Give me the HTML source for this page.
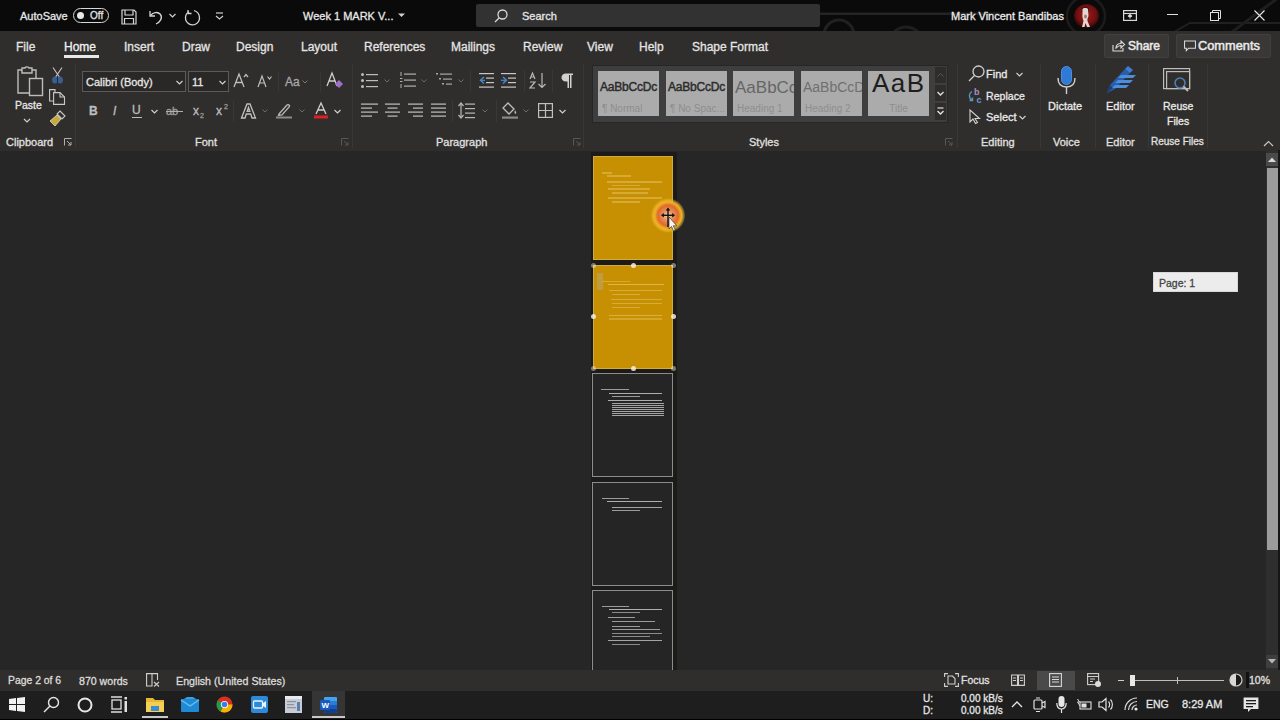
<!DOCTYPE html>
<html><head><meta charset="utf-8">
<style>
*{margin:0;padding:0;box-sizing:border-box}
html,body{width:1280px;height:720px;overflow:hidden;background:#262626;font-family:"Liberation Sans",sans-serif;color:#e6e6e6}
.a{position:absolute}
#title{left:0;top:0;width:1280px;height:31px;background:#0a0a0a}
#ribbon{left:0;top:31px;width:1280px;height:120px;background:#302e2c}
#doc{left:0;top:151px;width:1280px;height:519px;background:#262626}
#status{left:0;top:670px;width:1280px;height:21px;background:#302e2c;border-top:1px solid #302e2c}
#task{left:0;top:691px;width:1280px;height:29px;background:#1e1e1f;border-bottom:1px solid #000}
.t{position:absolute;white-space:nowrap;font-size:12px;line-height:14px;-webkit-text-stroke:0.3px currentColor}
svg{position:absolute;overflow:visible}
.sty{width:61px;height:45px;background:#ababab;overflow:hidden}
.sty .s1{position:absolute;left:2px;top:9px;font-size:12px;line-height:14px;color:#2b2b2b;white-space:nowrap;letter-spacing:-0.2px;font-weight:normal;-webkit-text-stroke:0.45px #2b2b2b}
.sty .s2{position:absolute;left:4px;top:32px;font-size:10px;line-height:12px;color:#8e8e8e;white-space:nowrap}
</style></head><body>
<div id="title" class="a"></div>
<div id="ribbon" class="a"></div>
<div id="doc" class="a"></div>
<div id="status" class="a"></div>
<div id="task" class="a"></div>

<!-- TITLE BAR -->
<svg style="left:0;top:0;overflow:hidden" width="1280" height="31">
  <g stroke="#1c1c1c" stroke-width="2.5" fill="none">
    <path d="M820 13.7 H1000" stroke="#242424" stroke-width="2.6"/>
    <circle cx="839" cy="35" r="15" stroke="#212121" stroke-width="3"/>
    <circle cx="906" cy="44" r="17" stroke="#1e1e1e" stroke-width="3"/>
    <circle cx="1086" cy="16" r="19"/>
    <path d="M1174 32 L1190 23 H1280" stroke="#202020" stroke-width="2"/>
    <path d="M1232 32 L1278 -2" stroke="#1e1e1e" stroke-width="3"/>
  </g>
</svg>
<div class="t" style="left:20px;top:9px;font-size:11px;color:#e8e8e8">AutoSave</div>
<div class="a" style="left:73px;top:8px;width:36px;height:15px;border:1.5px solid #d8d8d8;border-radius:8px"></div>
<div class="a" style="left:77px;top:12px;width:7px;height:7px;border-radius:50%;background:#e8e8e8"></div>
<div class="t" style="left:90px;top:9px;font-size:10px;color:#e0e0e0">Off</div>
<svg style="left:121px;top:9px" width="16" height="16" viewBox="0 0 16 16"><g fill="none" stroke="#d6d6d6" stroke-width="1.2"><path d="M1 1 H13 L15 3 V15 H1 Z"/><path d="M4 1 V6 H12 V1"/><path d="M3.5 15 V9.5 H12.5 V15"/></g></svg>
<svg style="left:148px;top:9px" width="16" height="16" viewBox="0 0 16 16"><g fill="none" stroke="#d6d6d6" stroke-width="1.3"><path d="M2 2 V7 H7"/><path d="M2.5 6.5 C5 3 10 2.5 12.5 5.5 C15 9 12 13 8 15"/></g></svg>
<svg style="left:169px;top:13px" width="7" height="5" viewBox="0 0 7 5"><path d="M0.5 1 L3.5 4 L6.5 1" fill="none" stroke="#cfcfcf" stroke-width="1.2"/></svg>
<svg style="left:184px;top:9px" width="17" height="17" viewBox="0 0 17 17"><g fill="none" stroke="#d6d6d6" stroke-width="1.3"><path d="M10 1.5 C13.5 2.5 15.5 5.5 15.5 9 A7 7 0 1 1 5 2.8"/><path d="M4 1 V4.5 H7.5"/></g></svg>
<svg style="left:215px;top:12px" width="9" height="8" viewBox="0 0 9 8"><g fill="none" stroke="#cfcfcf" stroke-width="1.2"><path d="M1 1 H8"/><path d="M1 4 L4.5 7 L8 4"/></g></svg>
<div class="t" style="left:303px;top:9px;font-size:11px;color:#e8e8e8">Week 1 MARK V...</div>
<svg style="left:398px;top:13px" width="7" height="5" viewBox="0 0 7 5"><path d="M0 0.5 H7 L3.5 4 Z" fill="#d0d0d0"/></svg>
<div class="a" style="left:476px;top:4px;width:344px;height:23px;background:#323232;border-radius:2px"></div>
<svg style="left:494px;top:9px" width="14" height="14" viewBox="0 0 14 14"><g fill="none" stroke="#d8d8d8" stroke-width="1.3"><circle cx="8.5" cy="5.5" r="4.5"/><path d="M5.3 8.7 L1 13"/></g></svg>
<div class="t" style="left:522px;top:9px;font-size:11px;color:#e6e6e6">Search</div>
<div class="t" style="left:951px;top:9px;font-size:11px;color:#ececec">Mark Vincent Bandibas</div>
<svg style="left:1074px;top:4px" width="25" height="24" viewBox="0 0 25 24">
  <defs><radialGradient id="av" cx="50%" cy="45%" r="55%"><stop offset="0" stop-color="#a01818"/><stop offset="0.7" stop-color="#701010"/><stop offset="1" stop-color="#2a0808"/></radialGradient></defs>
  <ellipse cx="12.5" cy="12" rx="12.5" ry="12" fill="url(#av)"/>
  <path d="M7.5 4 C9 2.5 14 2.5 15 4 L15 8 L8 8Z" fill="#3a1515"/>
  <path d="M8.5 5 C9 3.5 13.5 3.5 14 5 L14.5 12 C14 14 13 15 13.5 17 L16 23 L13 23 L11.5 19 L10.5 23 L8 23 L9.5 17 C9 15 8 13 8.5 10Z" fill="#e6d6d2"/>
  <ellipse cx="11.5" cy="12.5" rx="1.5" ry="2" fill="#9a8070"/>
</svg>
<svg style="left:1123px;top:10px" width="14" height="11" viewBox="0 0 14 11"><g fill="none" stroke="#d8d8d8" stroke-width="1.2"><rect x="0.6" y="0.6" width="12.8" height="9.8"/><path d="M0.6 3.5 H13.4"/><path d="M7 4.5 V8.5 M5 6.5 L7 4.5 L9 6.5"/></g></svg>
<div class="a" style="left:1167px;top:14px;width:11px;height:1px;background:#e0e0e0"></div>
<svg style="left:1210px;top:10px" width="12" height="11" viewBox="0 0 12 11"><g fill="none" stroke="#e0e0e0" stroke-width="1"><rect x="0.5" y="2.5" width="8" height="8"/><path d="M2.5 2.5 V0.5 H10.5 V8.5 H8.5"/></g></svg>
<svg style="left:1254px;top:10px" width="11" height="11" viewBox="0 0 11 11"><path d="M0.5 0.5 L10.5 10.5 M10.5 0.5 L0.5 10.5" stroke="#e8e8e8" stroke-width="1.1"/></svg>

<!-- RIBBON TABS -->
<div class="t" style="left:16px;top:40px;color:#e4e4e4">File</div>
<div class="t" style="left:64px;top:40px;color:#f2f2f2">Home</div>
<div class="a" style="left:64px;top:55px;width:35px;height:3px;background:#e8e8e8"></div>
<div class="t" style="left:124px;top:40px;color:#e4e4e4">Insert</div>
<div class="t" style="left:182px;top:40px;color:#e4e4e4">Draw</div>
<div class="t" style="left:236px;top:40px;color:#e4e4e4">Design</div>
<div class="t" style="left:301px;top:40px;color:#e4e4e4">Layout</div>
<div class="t" style="left:364px;top:40px;color:#e4e4e4">References</div>
<div class="t" style="left:451px;top:40px;color:#e4e4e4">Mailings</div>
<div class="t" style="left:523px;top:40px;color:#e4e4e4">Review</div>
<div class="t" style="left:587px;top:40px;color:#e4e4e4">View</div>
<div class="t" style="left:639px;top:40px;color:#e4e4e4">Help</div>
<div class="t" style="left:692px;top:40px;color:#e4e4e4">Shape Format</div>
<!-- share/comments -->
<div class="a" style="left:1104px;top:34px;width:65px;height:24px;background:#393837;border:1px solid #42403f;border-radius:2px"></div>
<svg style="left:1112px;top:40px" width="13" height="12" viewBox="0 0 13 12"><g fill="none" stroke="#dcdcdc" stroke-width="1.1"><path d="M1 5 V11 H11 V8"/><path d="M4 8 C4 5 6 3.5 9 3.5 V1 L12.5 4.5 L9 8 V5.5 C7 5.5 5.5 6.5 4 8Z"/></g></svg>
<div class="t" style="left:1128px;top:39px;color:#eaeaea;-webkit-text-stroke:0.5px #eaeaea">Share</div>
<div class="a" style="left:1176px;top:34px;width:95px;height:24px;background:#393837;border:1px solid #42403f;border-radius:2px"></div>
<svg style="left:1184px;top:40px" width="12" height="12" viewBox="0 0 13 12"><path d="M0.6 0.6 H12.4 V8.4 H5 L2.5 11 V8.4 H0.6 Z" fill="none" stroke="#dcdcdc" stroke-width="1.1"/></svg>
<div class="t" style="left:1198px;top:39px;font-size:12.8px;color:#eaeaea;-webkit-text-stroke:0.5px #eaeaea">Comments</div>

<!-- group separators -->
<div class="a" style="left:75px;top:64px;width:1px;height:84px;background:#3a3837"></div>
<div class="a" style="left:352px;top:64px;width:1px;height:84px;background:#3a3837"></div>
<div class="a" style="left:583px;top:64px;width:1px;height:84px;background:#3a3837"></div>
<div class="a" style="left:957px;top:64px;width:1px;height:84px;background:#3a3837"></div>
<div class="a" style="left:1040px;top:64px;width:1px;height:84px;background:#3a3837"></div>
<div class="a" style="left:1095px;top:64px;width:1px;height:84px;background:#3a3837"></div>
<div class="a" style="left:1148px;top:64px;width:1px;height:84px;background:#3a3837"></div>
<div class="a" style="left:1207px;top:64px;width:1px;height:84px;background:#3a3837"></div>

<!-- CLIPBOARD -->
<svg style="left:16px;top:66px" width="28" height="31" viewBox="0 0 28 31"><g fill="none" stroke="#bdbdbd" stroke-width="1.4"><path d="M6 4 H2 V27 H13"/><path d="M16 4 H20 V12"/><path d="M6 2 H9 C9 0.5 13 0.5 13 2 H16 V7 H6 Z"/><rect x="13.5" y="12.5" width="13" height="17"/></g></svg>
<div class="t" style="left:15px;top:98px;font-size:10.5px;color:#e6e6e6">Paste</div>
<svg style="left:23px;top:118px" width="8" height="5" viewBox="0 0 8 5"><path d="M1 1 L4 4 L7 1" fill="none" stroke="#cfcfcf" stroke-width="1.2"/></svg>
<svg style="left:51px;top:67px" width="13" height="17" viewBox="0 0 13 17"><g fill="none" stroke="#c8c8c8" stroke-width="1.1"><path d="M2 0.5 L9 11"/><path d="M11 0.5 L4 11"/></g><ellipse cx="4" cy="13" rx="3" ry="3.5" fill="#3b5e8e"/><ellipse cx="9" cy="13" rx="3" ry="3.5" fill="#3b5e8e"/><path d="M6.5 10 V16" stroke="#1a2a40" stroke-width="1"/></svg>
<svg style="left:49px;top:89px" width="17" height="16" viewBox="0 0 17 16"><g fill="none" stroke="#c8c8c8" stroke-width="1.1"><path d="M6 3 V0.6 H0.6 V12 H4"/><path d="M4.6 3.6 H11 L15.5 8 V15.4 H4.6 Z"/><path d="M11 3.6 V8 H15.5"/></g></svg>
<svg style="left:49px;top:110px" width="17" height="17" viewBox="0 0 17 17"><path d="M11 1 L16 6 L13 9 L8 4 Z" fill="none" stroke="#c8c8c8" stroke-width="1.1"/><path d="M8 5 L12 9 L6 16 L1 11 Z" fill="#c9a93a"/><path d="M8 5 L12 9 L6 16 L1 11 Z" fill="none" stroke="#d8d8d8" stroke-width="0.8"/></svg>
<div class="t" style="left:6px;top:135px;font-size:11px;color:#e0e0e0">Clipboard</div>
<svg style="left:64px;top:138px" width="8" height="8" viewBox="0 0 8 8"><g fill="none" stroke="#b0b0b0" stroke-width="1"><path d="M0.5 7.5 V0.5 H7.5"/><path d="M3 3 L7 7 M7 4 V7 H4"/></g></svg>

<!-- FONT GROUP -->
<div class="a" style="left:82px;top:71px;width:104px;height:21px;border:1px solid #5c5a59;background:#2a2827"></div>
<div class="t" style="left:86px;top:75px;font-size:11px;color:#e6e6e6">Calibri (Body)</div>
<svg style="left:176px;top:80px" width="7" height="5" viewBox="0 0 7 5"><path d="M0.5 1 L3.5 4 L6.5 1" fill="none" stroke="#d0d0d0" stroke-width="1.2"/></svg>
<div class="a" style="left:188px;top:71px;width:41px;height:21px;border:1px solid #5c5a59;background:#2a2827"></div>
<div class="t" style="left:192px;top:75px;font-size:11px;color:#e6e6e6">11</div>
<svg style="left:219px;top:80px" width="7" height="5" viewBox="0 0 7 5"><path d="M0.5 1 L3.5 4 L6.5 1" fill="none" stroke="#d0d0d0" stroke-width="1.2"/></svg>
<!-- grow/shrink -->
<svg style="left:233px;top:73px" width="16" height="15" viewBox="0 0 16 15"><g fill="none" stroke="#bdbdbd" stroke-width="1.3"><path d="M1 14 L6 1 L11 14 M3 9.5 H9"/><path d="M11 4 L13 1.5 L15 4"/></g></svg>
<svg style="left:257px;top:75px" width="15" height="13" viewBox="0 0 15 13"><g fill="none" stroke="#bdbdbd" stroke-width="1.2"><path d="M1 12 L5 1 L9 12 M2.5 8 H7.5"/><path d="M10.5 1.5 L12.5 4 L14.5 1.5"/></g></svg>
<div class="t" style="left:285px;top:75px;font-size:12px;color:#a8a8a8">Aa</div>
<svg style="left:302px;top:80px" width="6" height="4" viewBox="0 0 6 4"><path d="M0.5 0.5 L3 3 L5.5 0.5" fill="none" stroke="#7a7a7a" stroke-width="1"/></svg>
<div class="a" style="left:278px;top:72px;width:1px;height:20px;background:#3a3837"></div>
<div class="a" style="left:320px;top:72px;width:1px;height:20px;background:#3a3837"></div>
<svg style="left:326px;top:72px" width="18" height="17" viewBox="0 0 18 17"><g fill="none" stroke="#cfcfcf" stroke-width="1.3"><path d="M1 14 L6 1 L11 14 M3 9 H9"/></g><path d="M9 12 L13 8 L17 12 L13 16Z" fill="#a070c8"/></svg>
<!-- row 2 -->
<div class="t" style="left:89px;top:104px;font-size:12px;font-weight:bold;color:#bdbdbd">B</div>
<div class="t" style="left:113px;top:104px;font-size:12px;font-style:italic;color:#bdbdbd">I</div>
<div class="t" style="left:132px;top:103px;font-size:12px;color:#bdbdbd">U</div>
<div class="a" style="left:132px;top:117px;width:10px;height:1px;background:#bdbdbd"></div>
<svg style="left:151px;top:109px" width="7" height="5" viewBox="0 0 7 5"><path d="M0.5 1 L3.5 4 L6.5 1" fill="none" stroke="#cfcfcf" stroke-width="1.2"/></svg>
<div class="t" style="left:166px;top:104px;font-size:11px;color:#a0a0a0">ab</div>
<div class="a" style="left:166px;top:111px;width:17px;height:1px;background:#b0b0b0"></div>
<div class="t" style="left:193px;top:104px;font-size:12px;color:#bdbdbd">x</div>
<div class="t" style="left:200px;top:109px;font-size:7px;color:#9a9a9a">2</div>
<div class="t" style="left:216px;top:104px;font-size:12px;color:#bdbdbd">x</div>
<div class="t" style="left:224px;top:100px;font-size:7px;color:#9a9a9a">2</div>
<div class="a" style="left:233px;top:100px;width:1px;height:22px;background:#3a3837"></div>
<svg style="left:240px;top:103px" width="17" height="16" viewBox="0 0 17 16"><path d="M1.5 15 L7 1 H10 L15.5 15 H12 L10.7 11 H6.3 L5 15 Z M7.2 8.3 H9.8 L8.5 4.5 Z" fill="none" stroke="#c0c0c0" stroke-width="1.3"/></svg>
<svg style="left:262px;top:109px" width="6" height="4" viewBox="0 0 6 4"><path d="M0.5 0.5 L3 3 L5.5 0.5" fill="none" stroke="#6a6a6a" stroke-width="1"/></svg>
<svg style="left:275px;top:103px" width="18" height="16" viewBox="0 0 18 16"><g fill="none" stroke="#b8b8b8" stroke-width="1.3"><path d="M4 11 L12 2 C13 1 15 2 14.5 3.5 L7 12 L3.5 12.5 Z"/></g><rect x="1" y="13.5" width="16" height="2" fill="#8a8a8a"/></svg>
<svg style="left:299px;top:109px" width="6" height="4" viewBox="0 0 6 4"><path d="M0.5 0.5 L3 3 L5.5 0.5" fill="none" stroke="#6a6a6a" stroke-width="1"/></svg>
<svg style="left:313px;top:102px" width="16" height="17" viewBox="0 0 16 17"><g fill="none" stroke="#d0d0d0" stroke-width="1.3"><path d="M3 12 L8 1 L13 12 M5 8 H11"/></g><rect x="1" y="13.5" width="14" height="3" fill="#e02020"/></svg>
<svg style="left:334px;top:109px" width="7" height="5" viewBox="0 0 7 5"><path d="M0.5 1 L3.5 4 L6.5 1" fill="none" stroke="#cfcfcf" stroke-width="1.2"/></svg>
<div class="t" style="left:195px;top:135px;font-size:11px;color:#e0e0e0">Font</div>
<svg style="left:341px;top:138px" width="8" height="8" viewBox="0 0 8 8"><g fill="none" stroke="#575757" stroke-width="1"><path d="M0.5 7.5 V0.5 H7.5"/><path d="M3 3 L7 7 M7 4 V7 H4"/></g></svg>

<!-- PARAGRAPH -->
<svg style="left:361px;top:73px" width="17" height="15" viewBox="0 0 17 15"><g fill="#bdbdbd"><circle cx="1.5" cy="1.5" r="1.5"/><circle cx="1.5" cy="7.5" r="1.5"/><circle cx="1.5" cy="13.5" r="1.5"/><rect x="5" y="1" width="12" height="1.2"/><rect x="5" y="7" width="12" height="1.2"/><rect x="5" y="13" width="12" height="1.2"/></g></svg>
<svg style="left:384px;top:79px" width="6" height="4" viewBox="0 0 6 4"><path d="M0.5 0.5 L3 3 L5.5 0.5" fill="none" stroke="#6a6a6a" stroke-width="1"/></svg>
<svg style="left:400px;top:72px" width="16" height="16" viewBox="0 0 16 16"><g fill="#b0b0b0"><rect x="0.5" y="0" width="1" height="4"/><rect x="0" y="6" width="2.5" height="1"/><rect x="0" y="9" width="2.5" height="1"/><rect x="0.5" y="12" width="1" height="4"/><rect x="4" y="1.5" width="12" height="1.2"/><rect x="4" y="7.5" width="12" height="1.2"/><rect x="4" y="13.5" width="12" height="1.2"/></g></svg>
<svg style="left:421px;top:79px" width="6" height="4" viewBox="0 0 6 4"><path d="M0.5 0.5 L3 3 L5.5 0.5" fill="none" stroke="#6a6a6a" stroke-width="1"/></svg>
<svg style="left:436px;top:72px" width="16" height="16" viewBox="0 0 16 16"><g fill="#a8a8a8"><rect x="0" y="1" width="2" height="1.5"/><rect x="4" y="1.5" width="12" height="1.2"/><rect x="3" y="6" width="2" height="1.5"/><rect x="7" y="6.5" width="9" height="1.2"/><rect x="6" y="11" width="2" height="1.5"/><rect x="10" y="11.5" width="6" height="1.2"/></g></svg>
<svg style="left:458px;top:79px" width="6" height="4" viewBox="0 0 6 4"><path d="M0.5 0.5 L3 3 L5.5 0.5" fill="none" stroke="#6a6a6a" stroke-width="1"/></svg>
<div class="a" style="left:470px;top:70px;width:1px;height:22px;background:#3a3837"></div>
<svg style="left:479px;top:73px" width="15" height="15" viewBox="0 0 15 15"><g fill="#c8c8c8"><rect x="0" y="0" width="15" height="1.2"/><rect x="7" y="4.5" width="8" height="1.2"/><rect x="7" y="9" width="8" height="1.2"/><rect x="0" y="13.5" width="15" height="1.2"/></g><path d="M5 4 L1.5 7.3 L5 10.5" fill="none" stroke="#4a8ad0" stroke-width="1.4"/><rect x="2" y="6.7" width="4" height="1.2" fill="#4a8ad0"/></svg>
<svg style="left:501px;top:73px" width="15" height="15" viewBox="0 0 15 15"><g fill="#c8c8c8"><rect x="0" y="0" width="15" height="1.2"/><rect x="7" y="4.5" width="8" height="1.2"/><rect x="7" y="9" width="8" height="1.2"/><rect x="0" y="13.5" width="15" height="1.2"/></g><path d="M2 4 L5.5 7.3 L2 10.5" fill="none" stroke="#4a8ad0" stroke-width="1.4"/><rect x="0" y="6.7" width="4.5" height="1.2" fill="#4a8ad0"/></svg>
<div class="a" style="left:524px;top:70px;width:1px;height:22px;background:#3a3837"></div>
<svg style="left:529px;top:72px" width="18" height="17" viewBox="0 0 18 17"><g fill="none" stroke="#b8b8b8" stroke-width="1.2"><path d="M1 7 L3.5 1 L6 7 M1.8 5 H5.2"/><path d="M1 10 H6 L1 16 H6"/><path d="M13 1 V15.5 M9.5 12 L13 15.5 L16.5 12"/></g></svg>
<div class="a" style="left:552px;top:70px;width:1px;height:22px;background:#3a3837"></div>
<svg style="left:561px;top:73px" width="12" height="15" viewBox="0 0 12 15"><path d="M5 0.5 H12 V2 H10.5 V15 H9 V2 H8 V15 H6.5 V8.5 H5 C2 8.5 0.5 6.5 0.5 4.5 C0.5 2.5 2 0.5 5 0.5Z" fill="#d0d0d0"/></svg>
<!-- row2 -->
<svg style="left:361px;top:103px" width="17" height="15" viewBox="0 0 17 15"><g fill="#c0c0c0"><rect x="0" y="0.5" width="17" height="1.2"/><rect x="0" y="4.5" width="11" height="1.2"/><rect x="0" y="8.5" width="17" height="1.2"/><rect x="0" y="12.5" width="11" height="1.2"/></g></svg>
<svg style="left:385px;top:103px" width="15" height="15" viewBox="0 0 15 15"><g fill="#c0c0c0"><rect x="0" y="0.5" width="15" height="1.2"/><rect x="2.5" y="4.5" width="10" height="1.2"/><rect x="0" y="8.5" width="15" height="1.2"/><rect x="2.5" y="12.5" width="10" height="1.2"/></g></svg>
<svg style="left:408px;top:103px" width="15" height="15" viewBox="0 0 15 15"><g fill="#c0c0c0"><rect x="0" y="0.5" width="15" height="1.2"/><rect x="5" y="4.5" width="10" height="1.2"/><rect x="0" y="8.5" width="15" height="1.2"/><rect x="5" y="12.5" width="10" height="1.2"/></g></svg>
<svg style="left:431px;top:103px" width="15" height="15" viewBox="0 0 15 15"><g fill="#c0c0c0"><rect x="0" y="0.5" width="15" height="1.2"/><rect x="0" y="4.5" width="15" height="1.2"/><rect x="0" y="8.5" width="15" height="1.2"/><rect x="0" y="12.5" width="15" height="1.2"/></g></svg>
<div class="a" style="left:452px;top:100px;width:1px;height:22px;background:#3a3837"></div>
<svg style="left:458px;top:102px" width="17" height="17" viewBox="0 0 17 17"><g fill="#b8b8b8"><rect x="7" y="1.5" width="10" height="1.2"/><rect x="7" y="6" width="10" height="1.2"/><rect x="7" y="10.5" width="10" height="1.2"/><rect x="7" y="15" width="10" height="1.2"/><rect x="2.4" y="2" width="1.2" height="13"/></g><path d="M0.5 4 L3 1 L5.5 4 M0.5 13 L3 16 L5.5 13" fill="none" stroke="#b8b8b8" stroke-width="1.2"/></svg>
<svg style="left:482px;top:109px" width="6" height="4" viewBox="0 0 6 4"><path d="M0.5 0.5 L3 3 L5.5 0.5" fill="none" stroke="#6a6a6a" stroke-width="1"/></svg>
<div class="a" style="left:496px;top:100px;width:1px;height:22px;background:#3a3837"></div>
<svg style="left:501px;top:102px" width="18" height="17" viewBox="0 0 18 17"><path d="M7 1 L13 7 L8 12 L2 6 Z" fill="none" stroke="#bdbdbd" stroke-width="1.3"/><path d="M14 8 C15 10 16 11 14.5 12 C13 11 13.5 10 14 8Z" fill="#bdbdbd"/><rect x="1" y="14.5" width="16" height="2.2" fill="#8a8a8a"/></svg>
<svg style="left:523px;top:109px" width="6" height="4" viewBox="0 0 6 4"><path d="M0.5 0.5 L3 3 L5.5 0.5" fill="none" stroke="#6a6a6a" stroke-width="1"/></svg>
<svg style="left:538px;top:103px" width="15" height="15" viewBox="0 0 15 15"><g fill="none" stroke="#c0c0c0" stroke-width="1.2"><rect x="0.6" y="0.6" width="13.8" height="13.8"/><path d="M7.5 0.6 V14.4 M0.6 7.5 H14.4"/></g></svg>
<svg style="left:559px;top:109px" width="7" height="5" viewBox="0 0 7 5"><path d="M0.5 1 L3.5 4 L6.5 1" fill="none" stroke="#cfcfcf" stroke-width="1.2"/></svg>
<div class="t" style="left:436px;top:135px;font-size:11px;color:#e0e0e0">Paragraph</div>
<svg style="left:573px;top:138px" width="8" height="8" viewBox="0 0 8 8"><g fill="none" stroke="#575757" stroke-width="1"><path d="M0.5 7.5 V0.5 H7.5"/><path d="M3 3 L7 7 M7 4 V7 H4"/></g></svg>

<!-- STYLES -->
<div class="a" style="left:592px;top:65px;width:356px;height:58px;background:#3e3e3e;border:1px solid #262626"></div>
<div class="a sty" style="left:598px;top:71px"><div class="s1">AaBbCcDc</div><div class="s2">¶ Normal</div></div>
<div class="a sty" style="left:666px;top:71px"><div class="s1">AaBbCcDc</div><div class="s2">¶ No Spac...</div></div>
<div class="a sty" style="left:733px;top:71px"><div class="s1" style="font-size:17px;top:10px;color:#666;font-weight:normal;letter-spacing:0;-webkit-text-stroke:0">AaBbCc</div><div class="s2">Heading 1</div></div>
<div class="a sty" style="left:801px;top:71px"><div class="s1" style="font-size:14px;top:9px;color:#707070;font-weight:normal;letter-spacing:0;-webkit-text-stroke:0">AaBbCcD</div><div class="s2">Heading 2</div></div>
<div class="a sty" style="left:868px;top:71px"><div class="s1" style="font-size:26px;top:5px;left:4px;color:#1e1e1e;font-weight:normal;letter-spacing:1.5px;-webkit-text-stroke:0">AaB</div><div class="s2" style="left:0;width:61px;text-align:center">Title</div></div>
<div class="a" style="left:935px;top:67px;width:11px;height:16px;background:#2f2d2c"></div>
<div class="a" style="left:935px;top:85px;width:11px;height:16px;background:#2f2d2c"></div>
<div class="a" style="left:935px;top:103px;width:11px;height:17px;background:#2f2d2c"></div>
<svg style="left:937px;top:73px" width="7" height="4" viewBox="0 0 7 4"><path d="M0.5 3.5 L3.5 0.5 L6.5 3.5" fill="none" stroke="#555" stroke-width="1"/></svg>
<svg style="left:937px;top:91px" width="7" height="5" viewBox="0 0 7 5"><path d="M0.5 1 L3.5 4 L6.5 1" fill="none" stroke="#e0e0e0" stroke-width="1.4"/></svg>
<svg style="left:937px;top:107px" width="7" height="8" viewBox="0 0 7 8"><path d="M0.5 1 H6.5" stroke="#e0e0e0" stroke-width="1.2"/><path d="M0.5 4 L3.5 7 L6.5 4" fill="none" stroke="#e0e0e0" stroke-width="1.4"/></svg>
<div class="t" style="left:749px;top:135px;font-size:11px;color:#e0e0e0">Styles</div>
<svg style="left:945px;top:138px" width="8" height="8" viewBox="0 0 8 8"><g fill="none" stroke="#575757" stroke-width="1"><path d="M0.5 7.5 V0.5 H7.5"/><path d="M3 3 L7 7 M7 4 V7 H4"/></g></svg>

<!-- EDITING -->
<svg style="left:968px;top:65px" width="17" height="17" viewBox="0 0 17 17"><g fill="none" stroke="#d0d0d0" stroke-width="1.3"><circle cx="10.5" cy="6.5" r="5.5"/><path d="M6.5 10.5 L1 16"/></g></svg>
<div class="t" style="left:986px;top:67px;font-size:11px;color:#eaeaea">Find</div>
<svg style="left:1016px;top:72px" width="7" height="5" viewBox="0 0 7 5"><path d="M0.5 1 L3.5 4 L6.5 1" fill="none" stroke="#cfcfcf" stroke-width="1.2"/></svg>
<svg style="left:967px;top:87px" width="17" height="17" viewBox="0 0 17 17"><text x="7" y="8" font-family="Liberation Sans" font-weight="bold" font-size="9" fill="#a890c8">b</text><text x="9.5" y="16" font-family="Liberation Sans" font-weight="bold" font-size="9" fill="#6f9ccc">c</text><path d="M5 4.5 C1.5 6.5 1.5 11 5 13 M2.5 13.5 H5.5 V10.5" fill="none" stroke="#5a9ab8" stroke-width="1.4"/></svg>
<div class="t" style="left:986px;top:89px;font-size:10.6px;color:#eaeaea">Replace</div>
<svg style="left:969px;top:109px" width="12" height="15" viewBox="0 0 12 15"><path d="M1 1 L1 13 L4 10 L6.5 14.5 L8.5 13.5 L6 9.5 L10.5 9.5 Z" fill="none" stroke="#d0d0d0" stroke-width="1.1"/></svg>
<div class="t" style="left:986px;top:110px;font-size:11px;color:#eaeaea">Select</div>
<svg style="left:1019px;top:115px" width="7" height="5" viewBox="0 0 7 5"><path d="M0.5 1 L3.5 4 L6.5 1" fill="none" stroke="#cfcfcf" stroke-width="1.2"/></svg>
<div class="t" style="left:981px;top:135px;font-size:11px;color:#e0e0e0">Editing</div>
<!-- VOICE -->
<svg style="left:1056px;top:66px" width="21" height="29" viewBox="0 0 21 29"><rect x="5.5" y="0.5" width="10" height="18" rx="5" fill="#2f7ad6" stroke="#4a90e2" stroke-width="1"/><path d="M2 12 C2 18 5.5 21 10.5 21 C15.5 21 19 18 19 12" fill="none" stroke="#d0d0d0" stroke-width="1.4"/><path d="M10.5 21 V28" stroke="#d0d0d0" stroke-width="1.4"/></svg>
<div class="t" style="left:1048px;top:99px;font-size:11px;color:#eaeaea">Dictate</div>
<div class="t" style="left:1053px;top:135px;font-size:11px;color:#e0e0e0">Voice</div>
<!-- EDITOR -->
<svg style="left:1105px;top:65px" width="32" height="31" viewBox="0 0 32 31"><path d="M2 28 L5 20 L20 4 L25 8 L10 24 Z" fill="#2a5ea8"/><path d="M2 28 L5 20 L8 23 Z" fill="#1c3f75"/><path d="M20 4 L23 1 L28 5 L25 8Z" fill="#3b7fd4"/><g fill="#4a8ee0"><path d="M16 10 H31 L28 13 H13Z"/><path d="M13 15 H28 L25 18 H10Z"/><path d="M10 20 H24 L21 23 H7Z"/></g></svg>
<div class="t" style="left:1106px;top:99px;font-size:11px;color:#eaeaea">Editor</div>
<div class="t" style="left:1106px;top:135px;font-size:11px;color:#e0e0e0">Editor</div>
<!-- REUSE FILES -->
<svg style="left:1163px;top:68px" width="30" height="27" viewBox="0 0 30 27"><g fill="none" stroke="#bdbdbd" stroke-width="1.2"><rect x="0.6" y="0.6" width="26" height="20"/><rect x="3.6" y="3.6" width="23" height="17"/></g><circle cx="17" cy="15" r="5" fill="none" stroke="#4a7fb8" stroke-width="1.6"/><path d="M20.5 18.5 L25 23" stroke="#bdbdbd" stroke-width="1.8"/></svg>
<div class="t" style="left:1163px;top:99px;font-size:10.5px;color:#eaeaea">Reuse</div>
<div class="t" style="left:1167px;top:114px;font-size:10.5px;color:#eaeaea">Files</div>
<div class="t" style="left:1151px;top:135px;font-size:10px;color:#e0e0e0">Reuse Files</div>
<svg style="left:1263px;top:140px" width="11" height="7" viewBox="0 0 11 7"><path d="M1 6 L5.5 1.5 L10 6" fill="none" stroke="#c8c8c8" stroke-width="1.2"/></svg>

<!-- DOC -->
<div class="a" style="left:591px;top:152px;width:86px;height:518px;background:#1c1b1a"></div>
<div class="a" style="left:593px;top:156px;width:80px;height:104px;background:#c78f02;box-shadow:inset 0 0 0 1px #d2ac3a"></div>
<div class="a" style="left:593px;top:265px;width:80px;height:104px;background:#c78f02;box-shadow:inset 0 0 0 1px #d2ac3a"></div>
<div class="a" style="left:592px;top:373px;width:81px;height:104px;background:#252525;border:1.5px solid #8c8c8c;"></div>
<div class="a" style="left:592px;top:482px;width:81px;height:104px;background:#252525;border:1.5px solid #8c8c8c;"></div>
<div class="a" style="left:592px;top:590px;width:81px;height:80px;background:#252525;border:1.5px solid #8c8c8c;border-bottom:none"></div>
<div class="a" style="left:602px;top:172px;width:10px;height:1.6px;background:#ecd078;opacity:0.42;filter:blur(0.4px)"></div>
<div class="a" style="left:607px;top:175px;width:24px;height:1.6px;background:#ecd078;opacity:0.42;filter:blur(0.4px)"></div>
<div class="a" style="left:607px;top:181px;width:55px;height:1.6px;background:#ecd078;opacity:0.42;filter:blur(0.4px)"></div>
<div class="a" style="left:612px;top:184.5px;width:28px;height:1.6px;background:#ecd078;opacity:0.42;filter:blur(0.4px)"></div>
<div class="a" style="left:608px;top:188px;width:42px;height:1.6px;background:#ecd078;opacity:0.42;filter:blur(0.4px)"></div>
<div class="a" style="left:612px;top:192px;width:36px;height:1.6px;background:#ecd078;opacity:0.42;filter:blur(0.4px)"></div>
<div class="a" style="left:608px;top:197px;width:54px;height:1.6px;background:#ecd078;opacity:0.42;filter:blur(0.4px)"></div>
<div class="a" style="left:612px;top:201px;width:28px;height:1.6px;background:#ecd078;opacity:0.42;filter:blur(0.4px)"></div>
<div class="a" style="left:597px;top:273px;width:6px;height:17px;background:#b7a66a;opacity:.6"></div>
<div class="a" style="left:602px;top:280.5px;width:28px;height:1.6px;background:#ecd078;opacity:0.42;filter:blur(0.4px)"></div>
<div class="a" style="left:608px;top:283.5px;width:56px;height:1.6px;background:#ecd078;opacity:0.60;filter:blur(0.4px)"></div>
<div class="a" style="left:609px;top:289.5px;width:53px;height:1.6px;background:#ecd078;opacity:0.45;filter:blur(0.4px)"></div>
<div class="a" style="left:612px;top:293.5px;width:28px;height:1.6px;background:#ecd078;opacity:0.45;filter:blur(0.4px)"></div>
<div class="a" style="left:611px;top:298.5px;width:51px;height:1.6px;background:#ecd078;opacity:0.45;filter:blur(0.4px)"></div>
<div class="a" style="left:612px;top:302.5px;width:50px;height:1.6px;background:#ecd078;opacity:0.45;filter:blur(0.4px)"></div>
<div class="a" style="left:612px;top:306.5px;width:28px;height:1.6px;background:#ecd078;opacity:0.45;filter:blur(0.4px)"></div>
<div class="a" style="left:609px;top:314.5px;width:53px;height:1.6px;background:#ecd078;opacity:0.51;filter:blur(0.4px)"></div>
<div class="a" style="left:609px;top:318px;width:53px;height:1.6px;background:#ecd078;opacity:0.36;filter:blur(0.4px)"></div>
<div class="a" style="left:590.5px;top:262.5px;width:5px;height:5px;border-radius:50%;background:#f4f0e0;opacity:0.45"></div>
<div class="a" style="left:630.5px;top:262.5px;width:5px;height:5px;border-radius:50%;background:#f4f0e0;opacity:0.85"></div>
<div class="a" style="left:670.5px;top:262.5px;width:5px;height:5px;border-radius:50%;background:#f4f0e0;opacity:0.45"></div>
<div class="a" style="left:590.5px;top:313.5px;width:5px;height:5px;border-radius:50%;background:#f4f0e0;opacity:0.85"></div>
<div class="a" style="left:670.5px;top:313.5px;width:5px;height:5px;border-radius:50%;background:#f4f0e0;opacity:0.85"></div>
<div class="a" style="left:590.5px;top:365.5px;width:5px;height:5px;border-radius:50%;background:#f4f0e0;opacity:0.45"></div>
<div class="a" style="left:630.5px;top:365.5px;width:5px;height:5px;border-radius:50%;background:#f4f0e0;opacity:0.85"></div>
<div class="a" style="left:670.5px;top:365.5px;width:5px;height:5px;border-radius:50%;background:#f4f0e0;opacity:0.45"></div>
<div class="a" style="left:601px;top:389px;width:28px;height:1.1px;background:#d8d8d8;opacity:0.66;filter:blur(0.4px)"></div>
<div class="a" style="left:609px;top:393px;width:53px;height:1.1px;background:#d8d8d8;opacity:0.76;filter:blur(0.4px)"></div>
<div class="a" style="left:612px;top:396px;width:28px;height:1.1px;background:#d8d8d8;opacity:0.66;filter:blur(0.4px)"></div>
<div class="a" style="left:608px;top:400px;width:54px;height:1.1px;background:#d8d8d8;opacity:0.76;filter:blur(0.4px)"></div>
<div class="a" style="left:612px;top:403px;width:52px;height:1.1px;background:#d8d8d8;opacity:0.71;filter:blur(0.4px)"></div>
<div class="a" style="left:612px;top:405px;width:52px;height:1.1px;background:#d8d8d8;opacity:0.71;filter:blur(0.4px)"></div>
<div class="a" style="left:612px;top:407px;width:52px;height:1.1px;background:#d8d8d8;opacity:0.71;filter:blur(0.4px)"></div>
<div class="a" style="left:612px;top:409px;width:52px;height:1.1px;background:#d8d8d8;opacity:0.71;filter:blur(0.4px)"></div>
<div class="a" style="left:612px;top:411px;width:52px;height:1.1px;background:#d8d8d8;opacity:0.71;filter:blur(0.4px)"></div>
<div class="a" style="left:612px;top:413px;width:52px;height:1.1px;background:#d8d8d8;opacity:0.71;filter:blur(0.4px)"></div>
<div class="a" style="left:612px;top:415px;width:52px;height:1.1px;background:#d8d8d8;opacity:0.71;filter:blur(0.4px)"></div>
<div class="a" style="left:602px;top:497.5px;width:27px;height:1.1px;background:#d8d8d8;opacity:0.66;filter:blur(0.4px)"></div>
<div class="a" style="left:607px;top:501px;width:55px;height:1.1px;background:#d8d8d8;opacity:0.76;filter:blur(0.4px)"></div>
<div class="a" style="left:612px;top:506.5px;width:50px;height:1.1px;background:#d8d8d8;opacity:0.71;filter:blur(0.4px)"></div>
<div class="a" style="left:612px;top:509.5px;width:28px;height:1.1px;background:#d8d8d8;opacity:0.66;filter:blur(0.4px)"></div>
<div class="a" style="left:602px;top:605.5px;width:27px;height:1.1px;background:#d8d8d8;opacity:0.66;filter:blur(0.4px)"></div>
<div class="a" style="left:609px;top:609px;width:53px;height:1.1px;background:#d8d8d8;opacity:0.76;filter:blur(0.4px)"></div>
<div class="a" style="left:612px;top:612px;width:28px;height:1.1px;background:#d8d8d8;opacity:0.57;filter:blur(0.4px)"></div>
<div class="a" style="left:608px;top:617px;width:27px;height:1.1px;background:#d8d8d8;opacity:0.66;filter:blur(0.4px)"></div>
<div class="a" style="left:612px;top:621px;width:43px;height:1.1px;background:#d8d8d8;opacity:0.66;filter:blur(0.4px)"></div>
<div class="a" style="left:612px;top:625.5px;width:28px;height:1.1px;background:#d8d8d8;opacity:0.66;filter:blur(0.4px)"></div>
<div class="a" style="left:612px;top:629px;width:48px;height:1.1px;background:#d8d8d8;opacity:0.66;filter:blur(0.4px)"></div>
<div class="a" style="left:612px;top:633px;width:50px;height:1.1px;background:#d8d8d8;opacity:0.57;filter:blur(0.4px)"></div>
<div class="a" style="left:612px;top:636px;width:38px;height:1.1px;background:#d8d8d8;opacity:0.57;filter:blur(0.4px)"></div>
<div class="a" style="left:608px;top:640px;width:54px;height:1.1px;background:#d8d8d8;opacity:0.71;filter:blur(0.4px)"></div>
<div class="a" style="left:612px;top:644px;width:28px;height:1.1px;background:#d8d8d8;opacity:0.57;filter:blur(0.4px)"></div>
<svg style="left:650px;top:197px" width="36" height="36" viewBox="0 0 36 36">
<defs><radialGradient id="cg"><stop offset="0" stop-color="#f0d8a0"/><stop offset="0.3" stop-color="#e89060"/><stop offset="0.6" stop-color="#e06a28"/><stop offset="0.8" stop-color="#f0b428"/><stop offset="1" stop-color="#f0c030" stop-opacity="0.2"/></radialGradient></defs>
<circle cx="18" cy="18.5" r="17" fill="url(#cg)"/>
<g fill="#111">
<rect x="17.3" y="13" width="1.4" height="17"/>
<rect x="12" y="17.6" width="12" height="1.4"/>
<path d="M18 10.5 L20.3 13.5 L15.7 13.5Z"/>
<path d="M11 18.3 L13.8 16 L13.8 20.6Z M25 18.3 L22.2 16 L22.2 20.6Z"/>
</g>
<path d="M19 20 L19 32 L21.5 29.5 L23.5 34 L25.3 33 L23.3 28.8 L26.8 28.8 Z" fill="#f8f4ec" stroke="#222" stroke-width="0.6"/>
</svg>
<div class="a" style="left:1153px;top:272px;width:85px;height:20px;background:#ececec;border:1px solid #d8d8d8"></div>
<div class="t" style="left:1159px;top:276px;font-size:10.5px;color:#444">Page: 1</div>
<div class="a" style="left:1266px;top:151px;width:12px;height:519px;background:#2e2e2e"></div>
<div class="a" style="left:1278px;top:150px;width:2px;height:520px;background:#161616"></div>
<div class="a" style="left:1266px;top:153px;width:12px;height:13px;background:#4a4a4a"></div>
<svg style="left:1268px;top:157px" width="8" height="5" viewBox="0 0 8 5"><path d="M0 5 L4 0.5 L8 5Z" fill="#d8d8d8"/></svg>
<div class="a" style="left:1267px;top:168px;width:11px;height:382px;background:#9c9c9c"></div>
<div class="a" style="left:1266px;top:655px;width:12px;height:13px;background:#3e3e3e"></div>
<svg style="left:1268px;top:659px" width="8" height="5" viewBox="0 0 8 5"><path d="M0 0 L4 4.5 L8 0Z" fill="#b8b8b8"/></svg>
<!-- /DOC -->
<!-- STATUS BAR -->
<div class="t" style="left:8px;top:675px;font-size:10.4px;line-height:12px;color:#dcdcdc">Page 2 of 6</div>
<div class="t" style="left:79px;top:675px;font-size:10.6px;line-height:12px;color:#dcdcdc">870 words</div>
<svg style="left:146px;top:673px" width="14" height="14" viewBox="0 0 14 14"><g fill="none" stroke="#cfcfcf" stroke-width="1.1"><path d="M0.6 0.6 H6 V13 H0.6Z"/><path d="M6 0.6 H11.5 V7"/><path d="M8 9 L13 13.5 M13 9 L8 13.5"/></g></svg>
<div class="t" style="left:176px;top:675px;font-size:10.7px;line-height:12px;color:#dcdcdc">English (United States)</div>
<svg style="left:944px;top:673px" width="15" height="14" viewBox="0 0 15 14"><g fill="none" stroke="#d0d0d0" stroke-width="1.1"><path d="M0.6 4 V0.6 H4 M11 0.6 H14.4 V4 M14.4 10 V13.4 H11 M4 13.4 H0.6 V10"/><path d="M4 3 H8.5 L11 5.5 V11 H4Z"/></g></svg>
<div class="t" style="left:961px;top:674px;font-size:10.5px;line-height:12px;color:#e0e0e0">Focus</div>
<svg style="left:1011px;top:674px" width="14" height="12" viewBox="0 0 14 12"><g fill="none" stroke="#cfcfcf" stroke-width="1.1"><path d="M0.6 1 H6.5 V11.4 H0.6Z M7.5 1 H13.4 V11.4 H7.5Z"/><path d="M2 4 H5 M2 6.5 H5 M9 4 H12 M9 6.5 H12"/></g></svg>
<div class="a" style="left:1037px;top:671px;width:38px;height:19px;background:#4a4a4a"></div>
<svg style="left:1049px;top:673px" width="13" height="14" viewBox="0 0 13 14"><g fill="none" stroke="#d8d8d8" stroke-width="1.1"><rect x="0.6" y="0.6" width="11.8" height="12.8"/><path d="M3 4 H10 M3 6.5 H10 M3 9 H10"/></g></svg>
<svg style="left:1087px;top:673px" width="14" height="14" viewBox="0 0 14 14"><g fill="none" stroke="#cfcfcf" stroke-width="1.1"><rect x="0.6" y="0.6" width="11" height="11"/><path d="M0.6 3.5 H11.6 M3 6 H8 M3 8.5 H6"/></g><circle cx="11" cy="11" r="3" fill="#dcdcdc"/></svg>
<div class="a" style="left:1118px;top:680px;width:6px;height:1px;background:#cfcfcf"></div>
<div class="a" style="left:1130px;top:680px;width:94px;height:1px;background:#bdbdbd"></div>
<div class="a" style="left:1177px;top:677px;width:1px;height:7px;background:#bdbdbd"></div>
<div class="a" style="left:1130px;top:675px;width:5px;height:11px;background:#e8e8e8"></div>
<svg style="left:1229px;top:673px" width="14" height="14" viewBox="0 0 14 14"><circle cx="7" cy="7" r="6" fill="#1a1a1a" stroke="#cfcfcf" stroke-width="1.2"/><path d="M7 1 A6 6 0 0 0 7 13Z" fill="#d8d8d8"/></svg>
<div class="a" style="left:1246px;top:672px;width:3px;height:16px;background:#111"></div>
<div class="t" style="left:1249px;top:674px;font-size:10.5px;line-height:12px;color:#e0e0e0">10%</div>

<!-- TASKBAR -->
<svg style="left:9px;top:697px" width="16" height="15" viewBox="0 0 16 15"><g fill="#f0f0f0"><path d="M0 2 L7 1 V7 H0Z"/><path d="M8 0.9 L16 0 V7 H8Z"/><path d="M0 8 H7 V14 L0 13Z"/><path d="M8 8 H16 V15 L8 14Z"/></g></svg>
<svg style="left:43px;top:696px" width="17" height="17" viewBox="0 0 17 17"><g fill="none" stroke="#e6e6e6" stroke-width="1.4"><circle cx="10.5" cy="6.5" r="5"/><path d="M7 10 L1 16"/></g></svg>
<svg style="left:77px;top:697px" width="16" height="16" viewBox="0 0 16 16"><circle cx="8" cy="8" r="6.5" fill="none" stroke="#e6e6e6" stroke-width="2"/></svg>
<svg style="left:110px;top:696px" width="18" height="17" viewBox="0 0 18 17"><g fill="none" stroke="#e0e0e0" stroke-width="1.3"><path d="M1 1 H12 M1 16 H12"/><rect x="2" y="4" width="9" height="9"/></g><g fill="#e0e0e0"><rect x="14.5" y="1" width="2.5" height="2.5"/><rect x="14.5" y="5" width="2.5" height="11"/></g></svg>
<svg style="left:146px;top:697px" width="18" height="15" viewBox="0 0 18 15"><path d="M0 1 H7 L9 3 H18 V15 H0Z" fill="#e8b830"/><path d="M0 5 H18 V15 H0Z" fill="#f3cf55"/><rect x="5" y="9" width="8" height="5" fill="#3a8fd0"/></svg>
<div class="a" style="left:142px;top:716px;width:26px;height:2px;background:#c8c8c8"></div>
<svg style="left:181px;top:697px" width="18" height="15" viewBox="0 0 18 15"><rect x="0" y="2" width="18" height="13" rx="1" fill="#1e8ad6"/><path d="M0 3 L9 9 L18 3" fill="none" stroke="#6cc0f0" stroke-width="1.3"/><path d="M3 2 L6 0 H12 L15 2Z" fill="#3aa0e8"/></svg>
<svg style="left:216px;top:696px" width="17" height="17" viewBox="0 0 17 17"><circle cx="8.5" cy="8.5" r="8" fill="#d93025"/><path d="M8.5 8.5 L16.5 8.5 A8 8 0 0 1 4.5 15.4Z" fill="#f5b400"/><path d="M8.5 8.5 L4.5 15.4 A8 8 0 0 1 1.6 4.5Z" fill="#1e9e48"/><circle cx="8.5" cy="8.5" r="3.6" fill="#fff"/><circle cx="8.5" cy="8.5" r="2.8" fill="#3b7de8"/></svg>
<svg style="left:251px;top:696px" width="17" height="17" viewBox="0 0 17 17"><rect x="0" y="0" width="17" height="17" rx="2" fill="#2d8ad8"/><rect x="2.5" y="5" width="9" height="7" rx="1" fill="none" stroke="#e8f4ff" stroke-width="1.3"/><path d="M12 7 L15 5 V12 L12 10Z" fill="#e8f4ff"/></svg>
<svg style="left:285px;top:696px" width="17" height="17" viewBox="0 0 17 17"><rect x="0" y="0" width="17" height="17" fill="#c8ccd4"/><rect x="0" y="0" width="17" height="3" fill="#e8eaee"/><g fill="#8a93a6"><rect x="2" y="5" width="9" height="1.2"/><rect x="2" y="8" width="7" height="1.2"/><rect x="2" y="11" width="9" height="1.2"/></g><rect x="12" y="6" width="3" height="9" fill="#5a7fb0"/></svg>
<div class="a" style="left:312px;top:691px;width:33px;height:27px;background:#353535"></div>
<svg style="left:320px;top:697px" width="17" height="16" viewBox="0 0 17 16"><rect x="4" y="0" width="13" height="16" rx="1" fill="#41a5ee"/><rect x="4" y="4" width="13" height="4" fill="#2b7cd3"/><rect x="4" y="8" width="13" height="4" fill="#185abd"/><rect x="4" y="12" width="13" height="4" rx="1" fill="#103f91"/><rect x="0" y="3" width="10" height="10" rx="1" fill="#185abd"/><text x="1.5" y="11" font-family="Liberation Sans" font-weight="bold" font-size="8" fill="#fff">W</text></svg>
<div class="a" style="left:312px;top:716px;width:33px;height:2px;background:#c8c8c8"></div>

<div class="t" style="left:923px;top:693px;font-size:10px;line-height:12px;color:#e6e6e6">U:</div>
<div class="t" style="left:923px;top:705px;font-size:10px;line-height:12px;color:#e6e6e6">D:</div>
<div class="t" style="left:961px;top:693px;font-size:10px;line-height:12px;color:#e6e6e6">0.00 kB/s</div>
<div class="t" style="left:961px;top:705px;font-size:10px;line-height:12px;color:#e6e6e6">0.00 kB/s</div>
<svg style="left:1011px;top:701px" width="12" height="7" viewBox="0 0 12 7"><path d="M1 6 L6 1 L11 6" fill="none" stroke="#e6e6e6" stroke-width="1.3"/></svg>
<svg style="left:1033px;top:697px" width="13" height="16" viewBox="0 0 13 16"><g fill="none" stroke="#e0e0e0" stroke-width="1.2"><rect x="1" y="3" width="8" height="9" rx="1"/><path d="M9 6 L12 4.5 V10.5 L9 9 M3 1 H7 M3 14.5 H7"/></g></svg>
<svg style="left:1056px;top:696px" width="11" height="18" viewBox="0 0 11 18"><rect x="2.5" y="0" width="6" height="11" rx="3" fill="#e6e6e6"/><path d="M0.8 7 C0.8 11 3 13 5.5 13 C8 13 10.2 11 10.2 7 M5.5 13 V17" fill="none" stroke="#e6e6e6" stroke-width="1.2"/></svg>
<svg style="left:1077px;top:698px" width="15" height="13" viewBox="0 0 15 13"><g fill="none" stroke="#e0e0e0" stroke-width="1.1"><rect x="3" y="4" width="11" height="7"/></g><rect x="4.5" y="5.5" width="5" height="4" fill="#e0e0e0"/><path d="M0.5 1 L2.5 4 H0.5 L3 8" fill="none" stroke="#e0e0e0" stroke-width="1"/></svg>
<svg style="left:1098px;top:697px" width="16" height="15" viewBox="0 0 16 15"><path d="M1 5 H4 L8 1.5 V13.5 L4 10 H1Z" fill="none" stroke="#e6e6e6" stroke-width="1.2"/><path d="M10.5 4.5 C12 6 12 9 10.5 10.5 M12.5 2.5 C15 5 15 10 12.5 12.5" fill="none" stroke="#e6e6e6" stroke-width="1.1"/></svg>
<svg style="left:1124px;top:697px" width="14" height="14" viewBox="0 0 14 14"><g fill="none" stroke="#d8d8d8" stroke-width="1.2"><path d="M1 13 A12 12 0 0 1 13 1"/><path d="M4.5 13 A8.5 8.5 0 0 1 13 4.5"/><path d="M8 13 A5 5 0 0 1 13 8"/></g><circle cx="12" cy="12" r="1.6" fill="#e6e6e6"/></svg>
<div class="t" style="left:1146px;top:698px;font-size:10.5px;line-height:12px;color:#e6e6e6">ENG</div>
<div class="t" style="left:1182px;top:698px;font-size:11px;line-height:12px;color:#e6e6e6">8:29 AM</div>
<svg style="left:1243px;top:697px" width="16" height="16" viewBox="0 0 16 16"><path d="M0.6 0.6 H15.4 V12 H8 L5 15 V12 H0.6Z" fill="#e6e6e6"/><g fill="#1a1a1a"><rect x="3" y="3" width="10" height="1.3"/><rect x="3" y="6" width="10" height="1.3"/><rect x="3" y="9" width="7" height="1.3"/></g></svg>

</body></html>
